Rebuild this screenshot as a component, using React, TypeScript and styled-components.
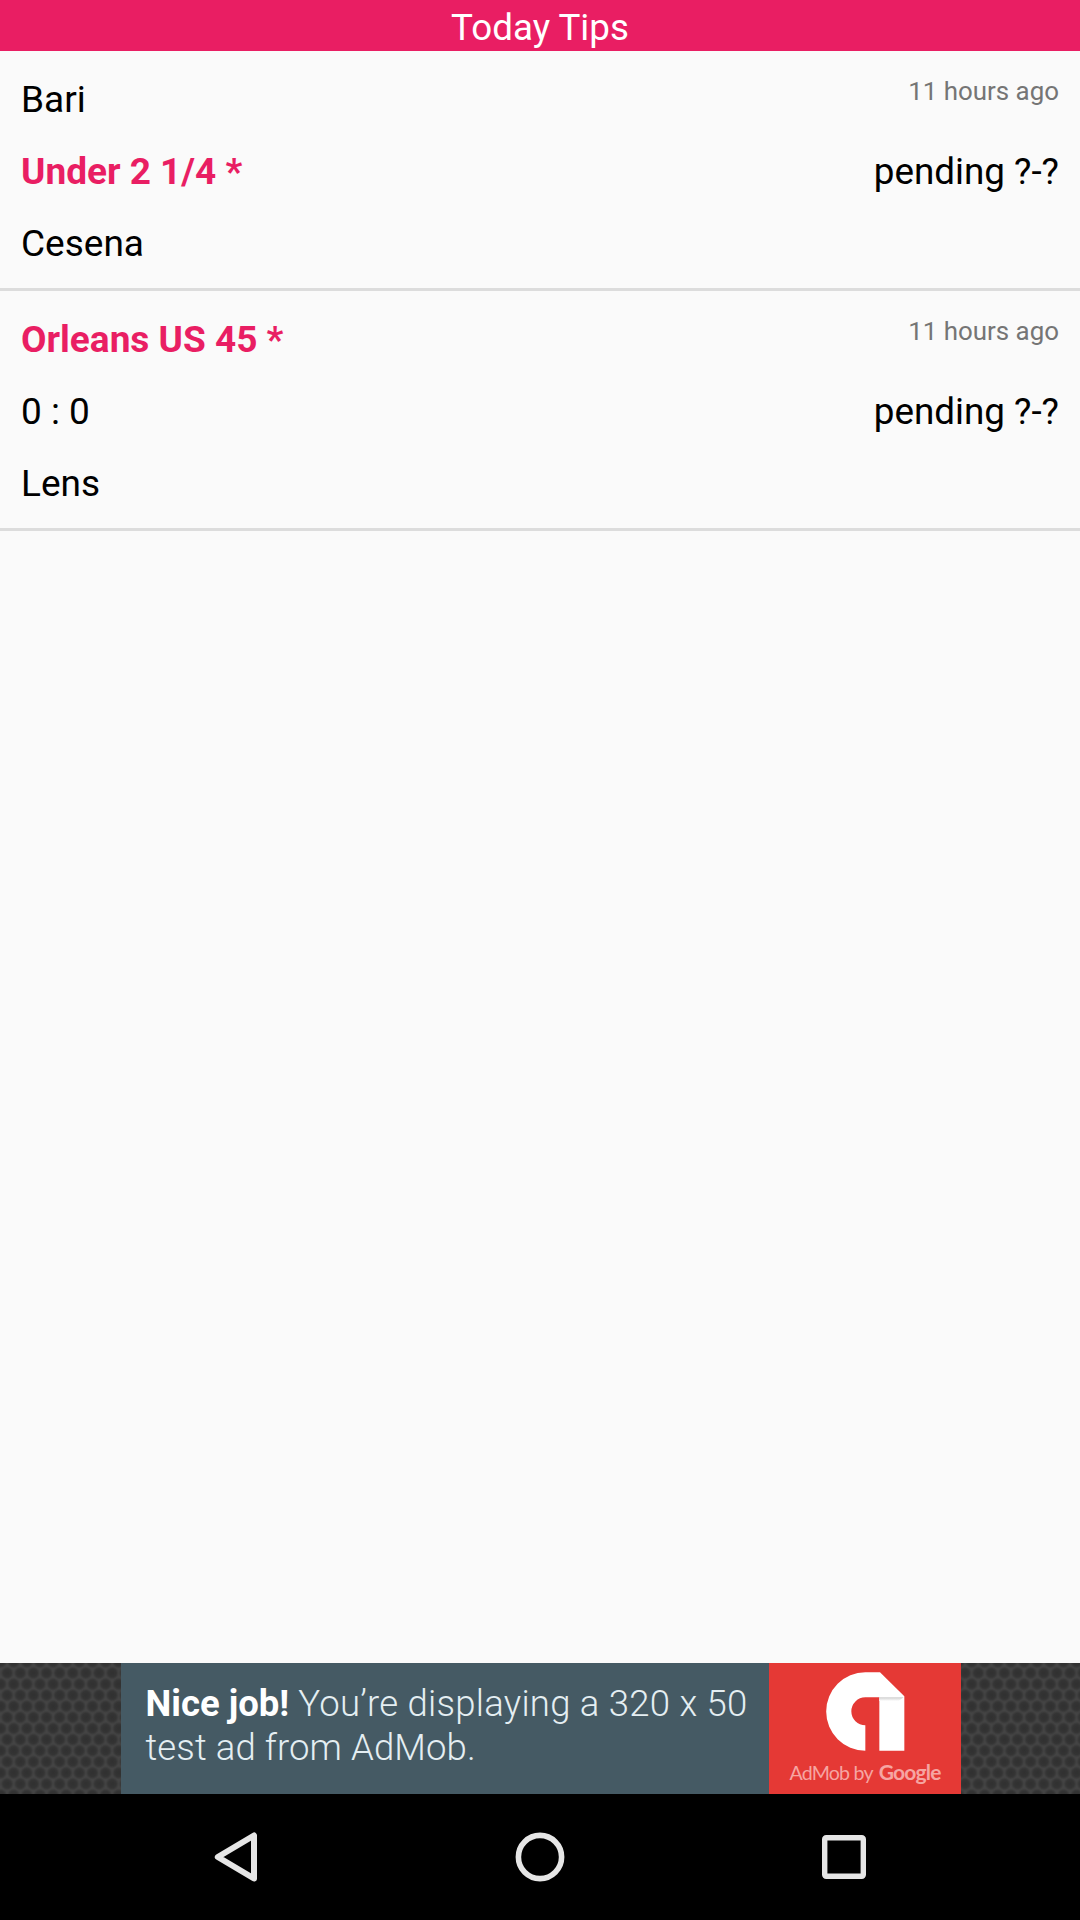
import React from "react";
import styled, { createGlobalStyle } from "styled-components";

const GlobalStyle = createGlobalStyle`
  *, *::before, *::after { box-sizing: border-box; }
  body {
    margin: 0;
    background: #fafafa;
    font-family: Roboto, "Noto Sans", sans-serif;
  }
`;

const Screen = styled.div`
  display: flex;
  flex-direction: column;
  width: 1080px;
  height: 1920px;
  background: #fafafa;
  overflow: hidden;
`;

const Header = styled.header`
  height: 51px;
  background: #e91e63;
  color: #fff;
  font-size: 36.75px;
  line-height: 56px;
  text-align: center;
`;

const TipList = styled.main`
  flex: 1;
`;

const TipRow = styled.article`
  display: flex;
  justify-content: space-between;
  height: 240px;
  padding: 13px 21px 8px;
  border-bottom: 3px solid #dcdcdc;
`;

const Column = styled.div<{ $end?: boolean }>`
  display: flex;
  flex-direction: column;
  align-items: ${(p) => (p.$end ? "flex-end" : "flex-start")};
`;

const Line = styled.div<{ $tip?: boolean }>`
  height: 72px;
  line-height: 72px;
  font-size: 37px;
  white-space: nowrap;
  color: ${(p) => (p.$tip ? "#e91e63" : "#000")};
  font-weight: ${(p) => (p.$tip ? 700 : 400)};
`;

const Status = styled(Line)`
  font-size: 36.8px;
`;

const Time = styled.time`
  height: 72px;
  line-height: 54px;
  font-size: 25.9px;
  color: #757575;
`;

const AdStrip = styled.aside`
  display: flex;
  height: 131px;
  background: #404040;
`;

const Texture = styled.div<{ $width: number; $shift: number }>`
  width: ${(p) => p.$width}px;
  background-color: #444;
  background-image:
    radial-gradient(circle at 50% 50%, #303030 0, #343434 4px, rgba(52, 52, 52, 0) 6.6px),
    radial-gradient(circle at 50% 50%, #303030 0, #343434 4px, rgba(52, 52, 52, 0) 6.6px);
  background-size: 13.125px 22.2px;
  background-position:
    ${(p) => p.$shift}px -1.1px,
    ${(p) => p.$shift + 6.56}px 10px;
`;

const AdCopy = styled.div`
  width: 648px;
  padding: 19px 0 0 24.5px;
  background: #455a64;
  color: #e4eef2;
  font-size: 36.5px;
  font-weight: 300;
  line-height: 44px;
  white-space: nowrap;

  strong {
    font-weight: 700;
    color: #fff;
  }
`;

const Spaced = styled.span<{ $gap: number }>`
  letter-spacing: ${(p) => p.$gap}px;
`;

const AdBrand = styled.div`
  display: flex;
  flex-direction: column;
  align-items: center;
  width: 192px;
  padding-top: 9px;
  background: #e53935;
`;

const BrandName = styled.div`
  display: flex;
  align-items: baseline;
  gap: 6px;
  margin-top: 9px;
  color: #f6a5a2;
  font-family: Lato, sans-serif;
  font-size: 19.6px;
  letter-spacing: -0.8px;
  line-height: 24px;
  white-space: nowrap;

  b {
    font-size: 21px;
    font-weight: 700;
  }
`;

const NavBar = styled.nav`
  display: flex;
  justify-content: center;
  height: 126px;
  background: #000;
`;

const NavButton = styled.button`
  display: flex;
  align-items: center;
  justify-content: center;
  width: 304px;
  padding: 0;
  border: 0;
  background: none;

  svg {
    fill: none;
    stroke: #e6e6e6;
    stroke-linejoin: round;
  }
`;

const AdMobLogo = () => (
  <svg width="79" height="79" viewBox="197 66 237 237">
    <defs>
      <linearGradient id="fold" x1="0" y1="0" x2="0" y2="1">
        <stop offset="0" stopColor="#cfcfcf" />
        <stop offset="1" stopColor="#ffffff" />
      </linearGradient>
    </defs>
    <path
      fill="#fff"
      d="M315 302V226A42 42 0 0 1 315 142H357V302H432V139L359 67H315A117.5 117.5 0 0 0 315 302Z"
    />
    <path fill="url(#fold)" d="M357 142H430L415 153H357Z" />
  </svg>
);

interface Tip {
  home: string;
  middle: string;
  away: string;
  pick: "home" | "middle" | "away";
  time: string;
  status: string;
}

const tips: Tip[] = [
  { home: "Bari", middle: "Under 2 1/4 *", away: "Cesena", pick: "middle", time: "11 hours ago", status: "pending ?-?" },
  { home: "Orleans US 45 *", middle: "0 : 0", away: "Lens", pick: "home", time: "11 hours ago", status: "pending ?-?" },
];

export default function App() {
  return (
    <>
      <GlobalStyle />
      <Screen>
        <Header>Today Tips</Header>
        <TipList>
          {tips.map((tip) => (
            <TipRow key={tip.home}>
              <Column>
                <Line $tip={tip.pick === "home"}>{tip.home}</Line>
                <Line $tip={tip.pick === "middle"}>{tip.middle}</Line>
                <Line $tip={tip.pick === "away"}>{tip.away}</Line>
              </Column>
              <Column $end>
                <Time>{tip.time}</Time>
                <Status>{tip.status}</Status>
              </Column>
            </TipRow>
          ))}
        </TipList>
        <AdStrip>
          <Texture $width={121} $shift={0.6} />
          <AdCopy>
            <strong>Nice job!</strong>
            <Spaced $gap={0.25}> You’re displaying a 320 x 50</Spaced>
            <br />
            <Spaced $gap={0.1}>test ad from AdMob.</Spaced>
          </AdCopy>
          <AdBrand>
            <AdMobLogo />
            <BrandName>
              <span>AdMob by</span>
              <b>Google</b>
            </BrandName>
          </AdBrand>
          <Texture $width={119} $shift={10.6} />
        </AdStrip>
        <NavBar>
          <NavButton aria-label="Back">
            <svg width="60" height="60" viewBox="0 0 60 60" strokeWidth="6">
              <path d="M11.8 30L48 8.5V51.5Z" />
            </svg>
          </NavButton>
          <NavButton aria-label="Home">
            <svg width="60" height="60" viewBox="0 0 60 60" strokeWidth="5.6">
              <circle cx="30" cy="30" r="21.6" />
            </svg>
          </NavButton>
          <NavButton aria-label="Recent apps">
            <svg width="60" height="60" viewBox="0 0 60 60" strokeWidth="5.4">
              <rect x="10.7" y="10.7" width="38.6" height="38.6" rx="1.5" />
            </svg>
          </NavButton>
        </NavBar>
      </Screen>
    </>
  );
}
